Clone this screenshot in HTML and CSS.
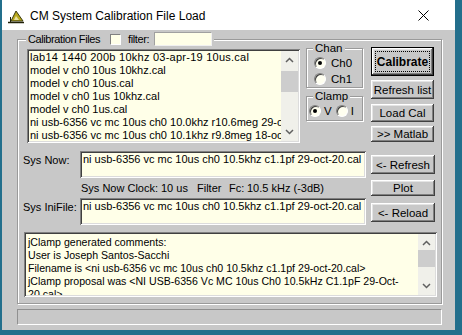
FILE: index.html
```html
<!DOCTYPE html>
<html lang="en">
<head>
    <meta charset="UTF-8">
    <title>CM System Calibration File Load</title>
    <link rel="stylesheet" href="styles.css">
</head>
<body>

    <div class="window">

        <!-- Title bar -->
        <div class="titlebar">
            <svg class="app-icon" width="16" height="16" viewBox="0 0 16 16">
                <polygon points="3,13 8,3 15,13" fill="#b8a81c" stroke="#3a3a10" stroke-width="1"/>
                <polygon points="6,12 8,8 11,12" fill="#e8e0a0"/>
                <line x1="0" y1="14.5" x2="16" y2="14.5" stroke="#202008" stroke-width="1.5"/>
                <line x1="2.5" y1="9" x2="2.5" y2="15" stroke="#202008" stroke-width="1"/>
            </svg>
            <span class="title">CM System Calibration File Load</span>
            <svg class="close" width="11" height="11" viewBox="0 0 11 11">
                <path d="M0.5 0.5 L10.5 10.5 M10.5 0.5 L0.5 10.5" stroke="#000" stroke-width="1"/>
            </svg>
        </div>

        <div class="client">
            <div class="group">
                <div class="group-head">
                    <span class="head-label">Calibration Files</span>
                    <span class="check"></span>
                    <span class="head-label">filter:</span>
                    <span class="filter-input"></span>
                </div>

                <!-- file list, channel options, main buttons -->
                <div class="top-row">
                    <div class="listbox">
                        <div class="list-items">
                            <div>lab14 1440 200b 10khz 03-apr-19 10us.cal</div>
                            <div>model v ch0 10us 10khz.cal</div>
                            <div>model v ch0 10us.cal</div>
                            <div>model v ch0 1us 10khz.cal</div>
                            <div>model v ch0 1us.cal</div>
                            <div>ni usb-6356 vc mc 10us ch0 10.0khz r10.6meg 29-oct-20.cal</div>
                            <div>ni usb-6356 vc mc 10us ch0 10.1khz r9.8meg 18-oct-20.cal</div>
                        </div>
                        <div class="vscroll list-scroll">
                            <svg class="arrow" width="9" height="6" viewBox="0 0 9 6"><path d="M1 5 L4.5 1.5 L8 5" fill="none" stroke="#606060" stroke-width="1.5"/></svg>
                            <div class="track"><div class="thumb"></div></div>
                            <svg class="arrow" width="9" height="6" viewBox="0 0 9 6"><path d="M1 1 L4.5 4.5 L8 1" fill="none" stroke="#606060" stroke-width="1.5"/></svg>
                        </div>
                    </div>

                    <div class="options">
                        <div class="box chan">
                            <div class="box-title">Chan</div>
                            <div class="radio-row"><span class="radio on"></span>Ch0</div>
                            <div class="radio-row"><span class="radio"></span>Ch1</div>
                        </div>
                        <div class="box clamp">
                            <div class="box-title">Clamp</div>
                            <div class="radio-line">
                                <span class="radio on"></span><span class="radio-label">V</span>
                                <span class="radio"></span><span class="radio-label">I</span>
                            </div>
                        </div>
                    </div>

                    <div class="buttons">
                        <button class="btn default"><span class="focus">Calibrate</span></button>
                        <button class="btn refresh-list">Refresh list</button>
                        <button class="btn load-cal">Load Cal</button>
                        <button class="btn matlab">&gt;&gt; Matlab</button>
                    </div>
                </div>

                <!-- system files -->
                <div class="mid">
                    <div class="sys-grid">
                        <div class="sys-label">Sys Now:</div>
                        <div class="field">ni usb-6356 vc mc 10us ch0 10.5khz c1.1pf 29-oct-20.cal</div>
                        <div></div>
                        <div class="clock">
                            <span class="c1">Sys Now Clock:</span><span class="c2">10 us</span><span class="c3">Filter</span><span class="c4">Fc:</span><span>10.5 kHz (-3dB)</span>
                        </div>
                        <div class="sys-label">Sys IniFile:</div>
                        <div class="field">ni usb-6356 vc mc 10us ch0 10.5khz c1.1pf 29-oct-20.cal</div>
                    </div>
                    <div class="mid-buttons">
                        <button class="btn b-refresh">&lt;- Refresh</button>
                        <button class="btn b-plot">Plot</button>
                        <button class="btn b-reload">&lt;- Reload</button>
                    </div>
                </div>

                <!-- comments -->
                <div class="comments">
                    <div class="comment-text">
                        <div>jClamp generated comments:</div>
                        <div>User is Joseph Santos-Sacchi</div>
                        <div>Filename is &lt;ni usb-6356 vc mc 10us ch0 10.5khz c1.1pf 29-oct-20.cal&gt;</div>
                        <div>jClamp proposal was &lt;NI USB-6356 Vc MC 10us Ch0 10.5kHz C1.1pF 29-Oct-</div>
                        <div>20.cal&gt;</div>
                    </div>
                    <div class="vscroll comment-scroll">
                        <svg class="arrow" width="9" height="6" viewBox="0 0 9 6"><path d="M1 5 L4.5 1.5 L8 5" fill="none" stroke="#606060" stroke-width="1.5"/></svg>
                        <div class="track"><div class="thumb"></div></div>
                        <svg class="arrow" width="9" height="6" viewBox="0 0 9 6"><path d="M1 1 L4.5 4.5 L8 1" fill="none" stroke="#606060" stroke-width="1.5"/></svg>
                    </div>
                </div>
            </div>

            <div class="status"></div>
        </div>
    </div>

</body>
</html>
```

FILE: styles.css
```css
* {
    margin: 0;
    padding: 0;
    box-sizing: border-box;
}

body {
    width: 462px;
    height: 335px;
    overflow: hidden;
    background: #236f8c;
    font: 11px "Liberation Sans", Arial, sans-serif;
    color: #000;
}

/* Window */
.window {
    width: 453px;
    height: 330px;
    margin-left: 2px;
    background: #c8c8c8;
    overflow: hidden;
}

.titlebar {
    height: 30px;
    background: #fff;
    display: flex;
    align-items: center;
    padding-left: 6px;
}

.app-icon {
    margin-right: 6px;
    margin-top: 1px;
}

.title {
    font: 12px "Liberation Sans", Arial, sans-serif;
    flex: 1;
    margin-top: 1px;
}

.close {
    margin-right: 26px;
}

.client {
    padding: 2px 0 0 15px;
}

/* Outer group box */
.group {
    width: 425px;
    margin-top: 7px;
    border: 1px solid #9a9a9a;
    box-shadow: inset 1px 1px 0 #fff, 1px 1px 0 #fff;
    padding-bottom: 6px;
}

.group-head {
    width: max-content;
    height: 14px;
    margin: -8px 0 0 8px;
    padding: 0 2px;
    background: #c8c8c8;
    display: flex;
    align-items: center;
}

.head-label {
    letter-spacing: -0.4px;
}

.check {
    width: 11px;
    height: 11px;
    margin: 0 7px 0 10px;
    background: #ffffe8;
    border: 1px solid;
    border-color: #808080 #fff #fff #808080;
}

.filter-input {
    width: 58px;
    height: 14px;
    margin-left: 5px;
    background: #ffffe8;
    border: 1px solid;
    border-color: #a0a0a0 #f0f0f0 #f0f0f0 #a0a0a0;
}

/* Top row */
.top-row {
    display: flex;
    align-items: flex-start;
    margin-top: 1px;
    padding-left: 9px;
}

.listbox {
    width: 273px;
    height: 94px;
    margin-top: 2px;
    display: flex;
    background: #ffffe8;
    box-shadow: inset 1px 1px 0 #808080, inset -1px -1px 0 #fff, inset 2px 2px 0 #404040, inset -2px -2px 0 #dcdcdc;
    padding: 2px;
}

.list-items {
    flex: 1;
    overflow: hidden;
    white-space: nowrap;
    line-height: 13px;
    padding-left: 1px;
}

.list-items div:first-child {
    letter-spacing: 0.25px;
}

.vscroll {
    width: 17px;
    display: flex;
    flex-direction: column;
    align-items: center;
    background: #f0f0ea;
}

.arrow {
    margin: 6px 0;
    flex: none;
}

.track {
    flex: 1;
    width: 100%;
}

.thumb {
    background: #cdcdcd;
    width: 100%;
}

.list-scroll .thumb {
    height: 21px;
    margin-top: 2px;
}

/* Chan / Clamp boxes */
.options {
    width: 57px;
    margin-left: 6px;
}

.box {
    border: 1px solid #9a9a9a;
    box-shadow: inset 1px 1px 0 #fff, 1px 1px 0 #fff;
}

.box-title {
    width: max-content;
    margin: -7px 0 0 6px;
    padding: 0 2px;
    line-height: 13px;
    background: #c8c8c8;
    font-size: 11.5px;
}

.chan {
    margin-top: 1px;
    height: 40px;
}

.radio-row {
    display: flex;
    align-items: center;
    height: 16px;
    padding-left: 7px;
    font-size: 11.5px;
}

.radio-row:first-of-type {
    margin-top: -1px;
}

.radio {
    width: 12px;
    height: 12px;
    border-radius: 50%;
    background: #fffff0;
    border: 1px solid;
    border-color: #808080 #fff #fff #808080;
    box-shadow: inset 1px 1px 0 #404040;
    margin-right: 5px;
    display: flex;
    align-items: center;
    justify-content: center;
}

.radio.on::after {
    content: "";
    width: 4px;
    height: 4px;
    border-radius: 50%;
    background: #000;
}

.clamp {
    margin-top: 8px;
    height: 25px;
}

.radio-line {
    display: flex;
    align-items: center;
    height: 15px;
    padding-left: 2px;
    font-size: 11.5px;
}

.radio-line .radio {
    margin-right: 3px;
}

.radio-label {
    margin-right: 4px;
}

/* Buttons */
.buttons {
    width: 63px;
    margin-left: 8px;
    display: flex;
    flex-direction: column;
}

.btn {
    font: 11.5px "Liberation Sans", Arial, sans-serif;
    color: #000;
    background: #c8c8c8;
    border: none;
    box-shadow: inset -1px -1px 0 #404040, inset 1px 1px 0 #fff, inset -2px -2px 0 #808080, inset 2px 2px 0 #e4e4e4;
    display: flex;
    align-items: center;
    justify-content: center;
    white-space: nowrap;
}

.btn.default {
    height: 29px;
    border: 1px solid #000;
    font-weight: bold;
    font-size: 12px;
    padding: 3px;
}

.focus {
    width: 100%;
    height: 100%;
    border: 1px dotted #000;
    display: flex;
    align-items: center;
    justify-content: center;
}

.refresh-list {
    height: 19px;
    margin-top: 4px;
}

.load-cal {
    height: 18px;
    margin-top: 5px;
}

.matlab {
    height: 16px;
    margin-top: 4px;
}

/* Sys Now / Sys IniFile */
.mid {
    display: flex;
    margin-top: 8px;
    padding-left: 5px;
}

.sys-grid {
    display: grid;
    grid-template-columns: 57px 286px;
    grid-template-rows: 27px 20px 27px;
}

.sys-label {
    padding-top: 3px;
    line-height: 13px;
}

.field {
    background: #ffffe8;
    box-shadow: inset 1px 1px 0 #808080, inset -1px -1px 0 #fff, inset 2px 2px 0 #404040, inset -2px -2px 0 #dcdcdc;
    padding: 2px 3px;
    line-height: 13px;
    white-space: nowrap;
    overflow: hidden;
}

.clock {
    display: flex;
    padding: 4px 0 0 1px;
    line-height: 13px;
    white-space: nowrap;
}

.c1 { width: 80px; }
.c2 { width: 36px; }
.c3 { width: 32px; }
.c4 { width: 18px; }

.mid-buttons {
    width: 64px;
    margin-left: 5px;
    display: flex;
    flex-direction: column;
}

.b-refresh {
    height: 19px;
    margin-top: 4px;
}

.b-plot {
    height: 16px;
    margin-top: 6px;
}

.b-reload {
    height: 19px;
    margin-top: 7px;
}

/* Comments */
.comments {
    width: 413px;
    height: 65px;
    margin: 7px 0 0 6px;
    display: flex;
    background: #ffffe8;
    box-shadow: inset 1px 1px 0 #808080, inset -1px -1px 0 #fff, inset 2px 2px 0 #404040, inset -2px -2px 0 #dcdcdc;
    padding: 2px;
}

.comment-text {
    flex: 1;
    overflow: hidden;
    white-space: nowrap;
    font-size: 10.6px;
    line-height: 13px;
    padding: 2px 0 0 2px;
}

.comment-scroll .thumb {
    height: 17px;
    margin-top: -2px;
}

/* Status bar */
.status {
    width: 425px;
    height: 16px;
    margin-top: 5px;
    border: 1px solid;
    border-color: #909090 #fff #fff #909090;
}
```
